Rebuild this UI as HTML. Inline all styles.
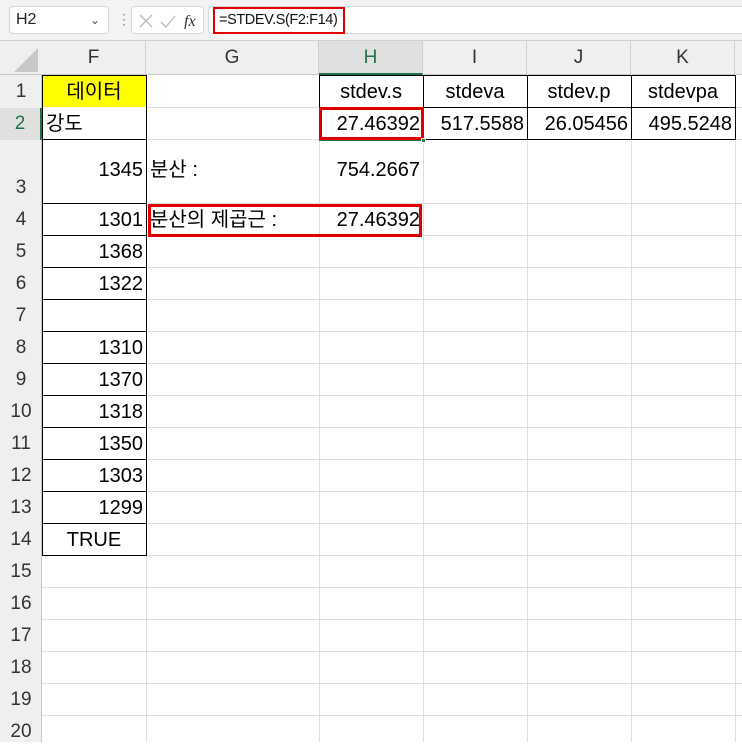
<!DOCTYPE html>
<html><head><meta charset="utf-8"><style>
*{margin:0;padding:0;box-sizing:border-box}
body{width:742px;height:742px;overflow:hidden;background:#fff;position:relative;font-family:"Liberation Sans","Noto Sans CJK KR",sans-serif;color:#000}
.a{position:absolute}
.hl{position:absolute;height:1px;left:42px;right:0;background:#dedede}
.vl{position:absolute;width:1px;top:75px;bottom:0;background:#dedede}
.ch{position:absolute;top:41px;height:34px;font-size:19px;color:#333;text-align:center;line-height:34px;border-right:1px solid #d0d0d0}
.rh{position:absolute;left:0;width:42px;font-size:19px;color:#333;text-align:center}
.c{position:absolute;font-size:20px;white-space:nowrap;display:flex;align-items:flex-end;padding-bottom:4px}
.r{justify-content:flex-end;padding-right:3px}
.m{justify-content:center}
.l{padding-left:4px}
.bl{position:absolute;left:42px;width:105px;height:1px;background:#000}
</style></head><body>
<div class="a" style="left:0;top:0;width:742px;height:41px;background:#f3f3f3;border-bottom:1px solid #d0d0d0"></div>
<div class="a" style="left:9px;top:6px;width:100px;height:28px;background:#fff;border:1px solid #d6d6d6;border-radius:4px;font-size:16px;line-height:26px;padding-left:6px;color:#222">H2<span style="position:absolute;right:8px;top:0;font-size:12px;color:#444">&#8964;</span></div>
<div class="a" style="left:117px;top:12px;font-size:14px;color:#888;line-height:14px">&#8942;</div>
<div class="a" style="left:131px;top:6px;width:73px;height:28px;background:#fff;border:1px solid #d6d6d6;border-radius:4px"></div>
<svg class="a" style="left:138px;top:13px" width="60" height="16"><path d="M2 2L14 14M14 2L2 14" stroke="#bbb" stroke-width="1.3" fill="none"/><path d="M23 9L28 14L37 3" stroke="#bbb" stroke-width="1.3" fill="none"/><text x="46" y="13" font-family="Liberation Serif,serif" font-style="italic" font-size="16" fill="#333">fx</text></svg>
<div class="a" style="left:208px;top:6px;width:540px;height:28px;background:#fff;border:1px solid #d6d6d6;border-radius:4px 0 0 4px"></div>
<div class="a" style="left:213px;top:7px;width:132px;height:27px;border:2px solid #e00000;font-size:14.5px;letter-spacing:-0.4px;line-height:22px;padding-left:4px;color:#111;white-space:nowrap">=STDEV.S(F2:F14)</div>
<div class="a" style="left:0;top:41px;width:42px;height:701px;background:#efefef;border-right:1px solid #c8c8c8"></div>
<div class="a" style="left:0;top:41px;width:742px;height:34px;background:#efefef;border-bottom:1px solid #c8c8c8"></div>
<svg class="a" style="left:10px;top:44px" width="32" height="30"><path d="M28 4L28 28L4 28Z" fill="#c8c8c8"/></svg>
<div class="ch" style="left:42px;width:104px">F</div>
<div class="ch" style="left:146px;width:173px">G</div>
<div class="ch" style="left:319px;width:104px;background:#e0e0e0;color:#217346;border-bottom:2px solid #217346">H</div>
<div class="ch" style="left:423px;width:104px">I</div>
<div class="ch" style="left:527px;width:104px">J</div>
<div class="ch" style="left:631px;width:104px">K</div>
<div class="ch" style="left:735px;width:10px"></div>
<div class="vl" style="left:146px"></div><div class="vl" style="left:319px"></div><div class="vl" style="left:423px"></div><div class="vl" style="left:527px"></div><div class="vl" style="left:631px"></div><div class="vl" style="left:735px"></div>
<div class="hl" style="top:107px"></div><div class="hl" style="top:139px"></div><div class="hl" style="top:203px"></div><div class="hl" style="top:235px"></div><div class="hl" style="top:267px"></div><div class="hl" style="top:299px"></div><div class="hl" style="top:331px"></div><div class="hl" style="top:363px"></div><div class="hl" style="top:395px"></div><div class="hl" style="top:427px"></div><div class="hl" style="top:459px"></div><div class="hl" style="top:491px"></div><div class="hl" style="top:523px"></div><div class="hl" style="top:555px"></div><div class="hl" style="top:587px"></div><div class="hl" style="top:619px"></div><div class="hl" style="top:651px"></div><div class="hl" style="top:683px"></div><div class="hl" style="top:715px"></div>
<div class="rh" style="top:76px;line-height:32px">1</div>
<div class="rh" style="top:108px;line-height:32px;background:#e0e0e0;color:#217346;border-right:2px solid #217346;height:32px">2</div>
<div class="rh" style="top:140px;height:64px;line-height:96px">3</div>
<div class="rh" style="top:204px;line-height:32px">4</div>
<div class="rh" style="top:236px;line-height:32px">5</div>
<div class="rh" style="top:268px;line-height:32px">6</div>
<div class="rh" style="top:300px;line-height:32px">7</div>
<div class="rh" style="top:332px;line-height:32px">8</div>
<div class="rh" style="top:364px;line-height:32px">9</div>
<div class="rh" style="top:396px;line-height:32px">10</div>
<div class="rh" style="top:428px;line-height:32px">11</div>
<div class="rh" style="top:460px;line-height:32px">12</div>
<div class="rh" style="top:492px;line-height:32px">13</div>
<div class="rh" style="top:524px;line-height:32px">14</div>
<div class="rh" style="top:556px;line-height:32px">15</div>
<div class="rh" style="top:588px;line-height:32px">16</div>
<div class="rh" style="top:620px;line-height:32px">17</div>
<div class="rh" style="top:652px;line-height:32px">18</div>
<div class="rh" style="top:684px;line-height:32px">19</div>
<div class="rh" style="top:716px;line-height:32px">20</div>
<div class="a" style="left:42px;top:75px;width:105px;height:33px;background:#ffff00;border:1px solid #000"></div>
<div class="a" style="left:42px;top:107px;width:105px;height:449px;border:1px solid #000;border-top:none;background:#fff"></div>
<div class="bl" style="top:139px"></div><div class="bl" style="top:203px"></div><div class="bl" style="top:235px"></div><div class="bl" style="top:267px"></div><div class="bl" style="top:299px"></div><div class="bl" style="top:331px"></div><div class="bl" style="top:363px"></div><div class="bl" style="top:395px"></div><div class="bl" style="top:427px"></div><div class="bl" style="top:459px"></div><div class="bl" style="top:491px"></div><div class="bl" style="top:523px"></div>
<div class="a" style="left:319px;top:75px;width:417px;height:65px;border:1px solid #000"></div>
<div class="a" style="left:319px;top:107px;width:417px;height:1px;background:#000"></div>
<div class="a" style="left:423px;top:75px;width:1px;height:65px;background:#000"></div>
<div class="a" style="left:527px;top:75px;width:1px;height:65px;background:#000"></div>
<div class="a" style="left:631px;top:75px;width:1px;height:65px;background:#000"></div>
<div class="c m" style="left:42px;top:76px;width:104px;height:32px">데이터</div>
<div class="c l" style="left:42px;top:108px;width:104px;height:32px">강도</div>
<div class="c r" style="left:42px;top:140px;width:104px;height:46px">1345</div>
<div class="c r" style="left:42px;top:204px;width:104px;height:32px">1301</div>
<div class="c r" style="left:42px;top:236px;width:104px;height:32px">1368</div>
<div class="c r" style="left:42px;top:268px;width:104px;height:32px">1322</div>
<div class="c r" style="left:42px;top:332px;width:104px;height:32px">1310</div>
<div class="c r" style="left:42px;top:364px;width:104px;height:32px">1370</div>
<div class="c r" style="left:42px;top:396px;width:104px;height:32px">1318</div>
<div class="c r" style="left:42px;top:428px;width:104px;height:32px">1350</div>
<div class="c r" style="left:42px;top:460px;width:104px;height:32px">1303</div>
<div class="c r" style="left:42px;top:492px;width:104px;height:32px">1299</div>
<div class="c m" style="left:42px;top:524px;width:104px;height:32px">TRUE</div>
<div class="c l" style="left:146px;top:140px;width:173px;height:46px">분산 :</div>
<div class="c r" style="left:319px;top:140px;width:104px;height:46px">754.2667</div>
<div class="c l" style="left:146px;top:204px;width:173px;height:32px">분산의 제곱근 :</div>
<div class="c r" style="left:319px;top:204px;width:104px;height:32px">27.46392</div>
<div class="c m" style="left:319px;top:76px;width:104px;height:32px">stdev.s</div>
<div class="c m" style="left:423px;top:76px;width:104px;height:32px">stdeva</div>
<div class="c m" style="left:527px;top:76px;width:104px;height:32px">stdev.p</div>
<div class="c m" style="left:631px;top:76px;width:104px;height:32px">stdevpa</div>
<div class="c r" style="left:319px;top:108px;width:104px;height:32px">27.46392</div>
<div class="c r" style="left:423px;top:108px;width:104px;height:32px">517.5588</div>
<div class="c r" style="left:527px;top:108px;width:104px;height:32px">26.05456</div>
<div class="c r" style="left:631px;top:108px;width:104px;height:32px">495.5248</div>
<div class="a" style="left:319px;top:138px;width:105px;height:3px;background:#217346"></div>
<div class="a" style="left:319px;top:107px;width:105px;height:33px;border:3px solid #e00000"></div>
<div class="a" style="left:421px;top:138px;width:5px;height:5px;background:#217346;border:1px solid #fff"></div>
<div class="a" style="left:148px;top:204px;width:274px;height:33px;border:3px solid #e00000"></div>
</body></html>
